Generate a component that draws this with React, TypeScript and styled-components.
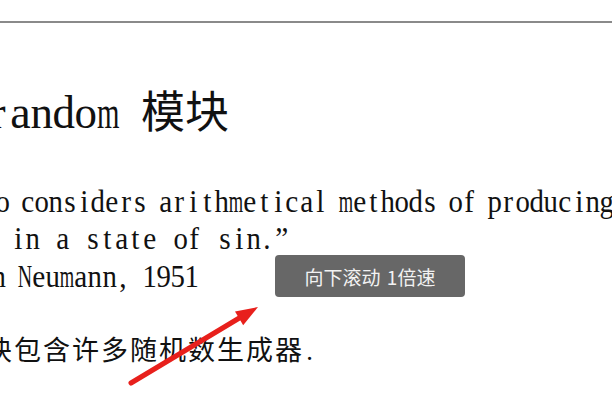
import React from "react";
import styled, { createGlobalStyle } from "styled-components";

const GlobalStyle = createGlobalStyle`
  html, body { margin: 0; padding: 0; background: #fff; }
  body { width: 612px; height: 402px; overflow: hidden; }
`;

/* Times-metric advance widths (em) used to squeeze serif glyphs into half-width cells */
const TIMES: Record<string, number> = {
  a: 0.444, b: 0.5, c: 0.444, d: 0.5, e: 0.444, f: 0.333, g: 0.5, h: 0.5, i: 0.278,
  j: 0.278, k: 0.5, l: 0.278, m: 0.778, n: 0.5, o: 0.5, p: 0.5, q: 0.5, r: 0.333,
  s: 0.389, t: 0.278, u: 0.5, v: 0.5, w: 0.722, x: 0.5, y: 0.5, z: 0.444, N: 0.722,
  ".": 0.25, ",": 0.25, "”": 0.444, "1": 0.5, "5": 0.5, "9": 0.5,
};

const isHan = (ch: string) => /[\u3000-\u9fff\uff00-\uffef]/.test(ch);

const Page = styled.div`
  position: relative;
  width: 612px;
  height: 402px;
  overflow: hidden;
  box-sizing: border-box;
  padding-top: 21px;
  color: #111;
  background: #fff;
`;

const Rule = styled.div`
  height: 0;
  border-top: 2px solid #8a8a8a;
`;

const Doc = styled.div`
  display: flex;
  flex-direction: column;
`;

const Line = styled.div<{ $gap: number; $indent: number; $h: number; $top: number }>`
  display: flex;
  align-items: baseline;
  gap: ${(p) => p.$gap}px;
  margin-left: ${(p) => p.$indent}px;
  margin-top: ${(p) => p.$top}px;
  height: ${(p) => p.$h}px;
  white-space: nowrap;
`;

const Word = styled.span`
  display: inline-flex;
  align-items: baseline;
  flex: none;
`;

const Cell = styled.span<{ $w: number }>`
  display: inline-flex;
  align-items: baseline;
  justify-content: center;
  flex: 0 0 ${(p) => p.$w}px;
  width: ${(p) => p.$w}px;
`;

const Glyph = styled.span<{ $size: number; $han: boolean }>`
  display: inline-block;
  font-family: ${(p) =>
    p.$han ? '"Noto Sans CJK SC", sans-serif' : '"Liberation Serif", "Noto Sans CJK SC", serif'};
  font-size: ${(p) => p.$size}px;
  line-height: 1;
  white-space: pre;
  transform-origin: center;
`;

type Metrics = { half: number; latin: number; han: number; hanW?: number; fill: number; max: number };

function MonoText({ text, m }: { text: string; m: Metrics }) {
  const words = text.split(" ");
  return (
    <>
      {words.map((w, wi) => (
        <Word key={wi}>
          {Array.from(w).map((ch, ci) => {
            const han = isHan(ch);
            const width = han ? m.hanW ?? m.half * 2 : m.half;
            const adv = (TIMES[ch] ?? 0.5) * m.latin;
            const scale = han ? 1 : Math.min(m.max, (m.fill * m.half) / adv);
            return (
              <Cell key={ci} $w={width}>
                <Glyph
                  $size={han ? m.han : m.latin}
                  $han={han}
                  style={han ? undefined : { transform: `scaleX(${scale.toFixed(3)})` }}
                >
                  {ch}
                </Glyph>
              </Cell>
            );
          })}
        </Word>
      ))}
    </>
  );
}

const HEAD: Metrics = { half: 22, latin: 47, han: 44, fill: 1.02, max: 0.98 };
const BODY: Metrics = { half: 14.1, latin: 30.5, han: 27, fill: 1.02, max: 0.96 };
const CJK: Metrics = { half: 12, latin: 28, han: 27, hanW: 29, fill: 1, max: 0.95 };

const Toast = styled.div`
  position: absolute;
  left: 275px;
  top: 255px;
  width: 190px;
  height: 42px;
  border-radius: 4px;
  background: #676767;
  color: #f2f2f2;
  font-family: "Noto Sans CJK SC", sans-serif;
  font-size: 19px;
  word-spacing: 2px;
  display: flex;
  align-items: center;
  justify-content: center;
`;

const Overlay = styled.svg`
  position: absolute;
  left: 0;
  top: 0;
  pointer-events: none;
`;

export default function App() {
  return (
    <Page>
      <GlobalStyle />
      <Rule />
      <Doc>
        <Line $gap={22} $indent={-13} $h={50} $top={64}>
          <MonoText text="random 模块" m={HEAD} />
        </Line>
        <Line $gap={11} $indent={-4.6} $h={37.5} $top={49.9}>
          <MonoText text="o considers arithmetical methods of producing" m={BODY} />
        </Line>
        <Line $gap={16.5} $indent={11} $h={37.5} $top={0}>
          <MonoText text="in a state of sin.”" m={BODY} />
        </Line>
        <Line $gap={12} $indent={-8.5} $h={37.5} $top={0}>
          <MonoText text="n Neumann, 1951" m={BODY} />
        </Line>
        <Line $gap={0} $indent={-16} $h={40} $top={35.3}>
          <MonoText text="块包含许多随机数生成器." m={CJK} />
        </Line>
      </Doc>
      <Toast>向下滚动 1倍速</Toast>
      <Overlay width="612" height="402" viewBox="0 0 612 402">
        <line x1="131" y1="383" x2="241" y2="317" stroke="#e8201c" strokeWidth="5" strokeLinecap="round" />
        <polygon points="258,307 243.2,325.2 235,311.4" fill="#e8201c" />
      </Overlay>
    </Page>
  );
}
